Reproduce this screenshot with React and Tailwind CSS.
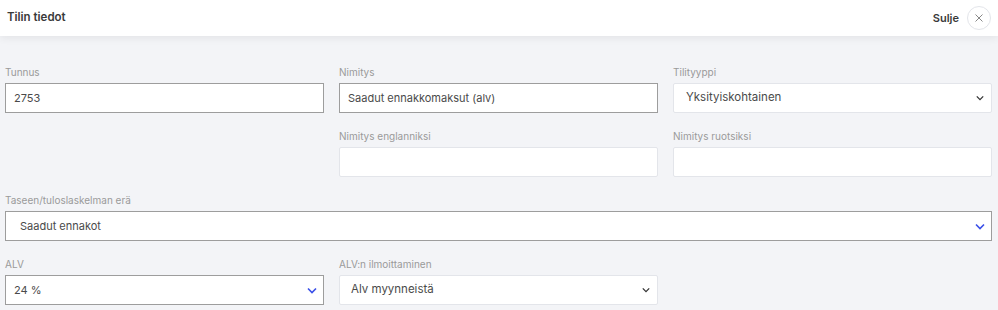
import React from "react";

const Chevron = ({ className }) => (
  <svg className={className} width="10" height="7" viewBox="0 0 10 7" fill="none">
    <path d="M1 1.5L5 5.5L9 1.5" stroke="currentColor" strokeWidth="1.6" />
  </svg>
);

const Label = ({ children }) => (
  <div className="text-[10px] leading-[14px] text-[#9a9a9a] mb-[4px] h-[14px]">{children}</div>
);

const DarkInput = ({ value }) => (
  <div className="h-[30px] bg-white border border-[#9d9d9d] flex items-center pl-[8px] text-[11px] text-[#4a4a4a]">{value}</div>
);

const LightInput = ({ value }) => (
  <div className="h-[30px] bg-white border border-[#e3e5ea] rounded-[2px] flex items-center pl-[13px] text-[11px] text-[#4a4a4a]">{value}</div>
);

const LightSelect = ({ value, pl }) => (
  <div className={`h-[30px] bg-white border border-[#e3e5ea] rounded-[2px] flex items-center justify-between ${pl} pr-[7px] text-[11.5px] text-[#4a4a4a]`}>
    <span>{value}</span>
    <Chevron className="text-[#333] w-[8px] h-[6px]" />
  </div>
);

const DarkSelect = ({ value, pl }) => (
  <div className={`h-[30px] bg-white border border-[#9d9d9d] flex items-center justify-between ${pl} pr-[6px] text-[11px] text-[#4a4a4a]`}>
    <span>{value}</span>
    <Chevron className="text-[#3a50e8]" />
  </div>
);

export default function App() {
  return (
    <div className="w-[998px] h-[310px] bg-[#f3f4f7] overflow-hidden" style={{ fontFamily: "Inter, 'Noto Sans', sans-serif" }}>
      <div className="h-[36px] bg-white flex items-center justify-between pl-[7px] pr-[7px] shadow-[0_2px_8px_rgba(0,0,0,0.07)] relative">
        <div className="text-[11.5px] font-semibold text-[#3a3a3a]">Tilin tiedot</div>
        <div className="flex items-center gap-[8px]">
          <span className="text-[11px] font-semibold text-[#3a3a3a]">Sulje</span>
          <div className="w-[24px] h-[24px] rounded-full border border-[#e3e5ea] flex items-center justify-center text-[#888]">
            <svg width="8" height="8" viewBox="0 0 8 8"><path d="M0.5 0.5L7.5 7.5M7.5 0.5L0.5 7.5" stroke="currentColor" strokeWidth="1" /></svg>
          </div>
        </div>
      </div>
      <div className="pl-[5px] pr-[6px] pt-[29px] flex flex-col gap-[16px]">
        <div className="grid grid-cols-3 gap-x-[15px] gap-y-[16px]">
          <div>
            <Label>Tunnus</Label>
            <DarkInput value="2753" />
          </div>
          <div>
            <Label>Nimitys</Label>
            <DarkInput value="Saadut ennakkomaksut (alv)" />
          </div>
          <div>
            <Label>Tilityyppi</Label>
            <LightSelect value="Yksityiskohtainen" pl="pl-[12px]" />
          </div>
          <div />
          <div>
            <Label>Nimitys englanniksi</Label>
            <LightInput value="" />
          </div>
          <div>
            <Label>Nimitys ruotsiksi</Label>
            <LightInput value="" />
          </div>
        </div>
        <div>
          <Label>Taseen/tuloslaskelman erä</Label>
          <DarkSelect value="Saadut ennakot" pl="pl-[14px]" />
        </div>
        <div className="grid grid-cols-3 gap-x-[15px]">
          <div>
            <Label>ALV</Label>
            <DarkSelect value="24 %" pl="pl-[8px]" />
          </div>
          <div>
            <Label>ALV:n ilmoittaminen</Label>
            <LightSelect value="Alv myynneistä" pl="pl-[11px]" />
          </div>
        </div>
      </div>
    </div>
  );
}
